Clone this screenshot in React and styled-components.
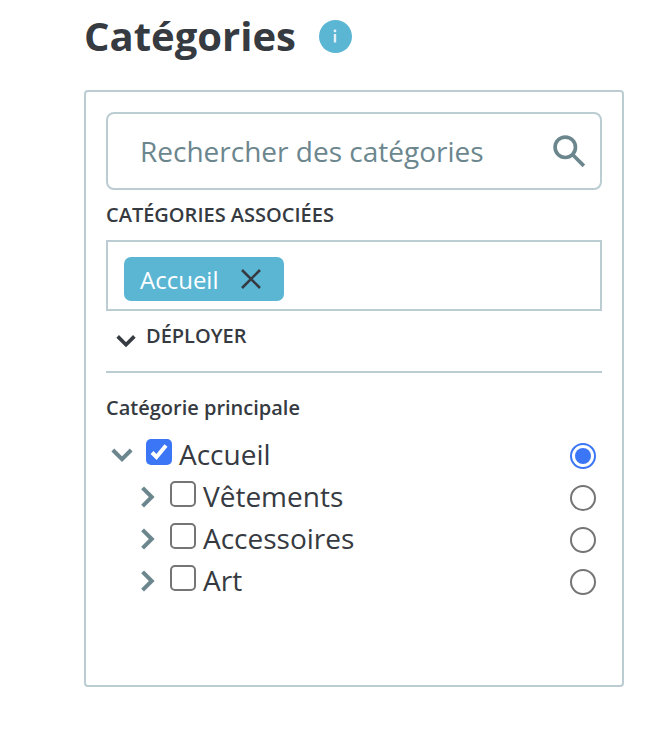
import React from "react";
import styled, { createGlobalStyle } from "styled-components";

const GlobalStyle = createGlobalStyle`
  html, body {
    margin: 0;
    background: #fff;
    font-family: "Open Sans", "Liberation Sans", sans-serif;
    color: #363a41;
  }
`;

const Page = styled.div`
  width: 540px;
  padding: 0 30px 0 84px;
`;

const Header = styled.div`
  display: flex;
  align-items: center;
  gap: 23px;
  height: 90px;
  padding-bottom: 18px;
  box-sizing: border-box;
`;

const Title = styled.h1`
  margin: -1px 0 0;
  font-size: 40px;
  line-height: 44px;
  font-weight: 700;
`;

const InfoBadge = styled.span`
  width: 33px;
  height: 33px;
  border-radius: 50%;
  background: #5bb6d4;
  color: #fff;
  display: flex;
  align-items: center;
  justify-content: center;
`;

const Panel = styled.section`
  box-sizing: border-box;
  height: 597px;
  padding: 20px;
  border: 2px solid #bbcdd2;
  border-radius: 4px;
`;

const Search = styled.div`
  box-sizing: border-box;
  height: 78px;
  padding: 0 14px 0 32px;
  border: 2px solid #bbcdd2;
  border-radius: 8px;
  display: flex;
  align-items: center;
  justify-content: space-between;
  font-size: 28px;
  color: #6c868e;
`;

const SectionLabel = styled.div`
  margin-top: ${(p) => (p.$upper ? "13px" : "23px")};
  font-size: 20px;
  line-height: 24px;
  font-weight: 600;
  text-transform: ${(p) => (p.$upper ? "uppercase" : "none")};
`;

const TagBox = styled.div`
  box-sizing: border-box;
  height: 71px;
  margin-top: 13px;
  padding: 15px 16px;
  border: 2px solid #bbcdd2;
`;

const Tag = styled.span`
  box-sizing: border-box;
  display: inline-flex;
  align-items: center;
  gap: 22px;
  width: 160px;
  height: 44px;
  padding-left: 16px;
  border-radius: 7px;
  background: #5bb6d4;
  color: #fff;
  font-size: 24px;
`;

const Expand = styled.div`
  display: flex;
  align-items: center;
  gap: 10px;
  height: 60px;
  padding-left: 10px;
  border-bottom: 2px solid #bbcdd2;
  font-size: 20px;
  font-weight: 600;
  text-transform: uppercase;
  & > span { margin-top: -11px; }
`;

const Tree = styled.ul`
  list-style: none;
  margin: 15px 0 0;
  padding: 0;
`;

const Row = styled.li`
  display: flex;
  align-items: center;
  height: 42px;
  padding-left: ${(p) => (p.$child ? "32px" : "5px")};
  padding-right: 6px;
`;

const Toggle = styled.span`
  width: ${(p) => (p.$open ? "35px" : "32px")};
  margin-top: -2px;
  display: flex;
  align-items: center;
`;

const Check = styled.span`
  box-sizing: border-box;
  flex: none;
  width: 26px;
  height: 26px;
  margin-top: -8px;
  border-radius: 5px;
  border: ${(p) => (p.$on ? "none" : "2px solid #757575")};
  background: ${(p) => (p.$on ? "#3a76f5" : "#fff")};
  display: flex;
  align-items: center;
  justify-content: center;
`;

const Name = styled.span`
  flex: 1;
  margin: -4px 0 0 7px;
  font-size: 28px;
  line-height: 36px;
`;

const Radio = styled.span`
  box-sizing: border-box;
  flex: none;
  width: 26px;
  height: 26px;
  border-radius: 50%;
  border: 2px solid ${(p) => (p.$on ? "#3a76f5" : "#757575")};
  display: flex;
  align-items: center;
  justify-content: center;
  &::after {
    content: "";
    display: ${(p) => (p.$on ? "block" : "none")};
    width: 16px;
    height: 16px;
    border-radius: 50%;
    background: #3a76f5;
  }
`;

const Chevron = ({ open, color, size }) => (
  <svg width={size} height={size} viewBox="0 0 24 24" fill="none" stroke={color} strokeWidth="4.4">
    <path d={open ? "M2 6.5l10 10 10-10" : "M5 2l10 10-10 10"} />
  </svg>
);

const categories = [
  { name: "Vêtements" },
  { name: "Accessoires" },
  { name: "Art" },
];

export default function App() {
  return (
    <Page>
      <GlobalStyle />
      <Header>
        <Title>Catégories</Title>
        <InfoBadge>
          <svg width="6" height="14" viewBox="0 0 6 14" fill="#e3f3f8">
            <rect x="1.6" y="0.5" width="2.8" height="2.8" rx="1.4" />
            <rect x="1.8" y="5" width="2.4" height="8.5" />
          </svg>
        </InfoBadge>
      </Header>
      <Panel>
        <Search>
          <span>Rechercher des catégories</span>
          <svg width="34" height="34" viewBox="0 0 32 32" fill="none" stroke="#6c868e" strokeWidth="3.4">
            <circle cx="12.5" cy="12.5" r="9.6" />
            <path d="M19.5 19.5L30 30" />
          </svg>
        </Search>
        <SectionLabel $upper>Catégories associées</SectionLabel>
        <TagBox>
          <Tag>
            Accueil
            <svg width="22" height="22" viewBox="0 0 22 22" stroke="#363a41" strokeWidth="2.6">
              <path d="M2 2l18 18M20 2L2 20" />
            </svg>
          </Tag>
        </TagBox>
        <Expand>
          <Chevron open color="#363a41" size={20} />
          <span>Déployer</span>
        </Expand>
        <SectionLabel>Catégorie principale</SectionLabel>
        <Tree>
          <Row>
            <Toggle $open>
              <Chevron open color="#6c868e" size={22} />
            </Toggle>
            <Check $on>
              <svg width="20" height="20" viewBox="0 0 20 20" fill="none" stroke="#fff" strokeWidth="4">
                <path d="M3 10.5l4.5 4.5L17 3.5" />
              </svg>
            </Check>
            <Name>Accueil</Name>
            <Radio $on />
          </Row>
          {categories.map((c) => (
            <Row $child key={c.name}>
              <Toggle>
                <Chevron color="#6c868e" size={22} />
              </Toggle>
              <Check />
              <Name>{c.name}</Name>
              <Radio />
            </Row>
          ))}
        </Tree>
      </Panel>
    </Page>
  );
}
